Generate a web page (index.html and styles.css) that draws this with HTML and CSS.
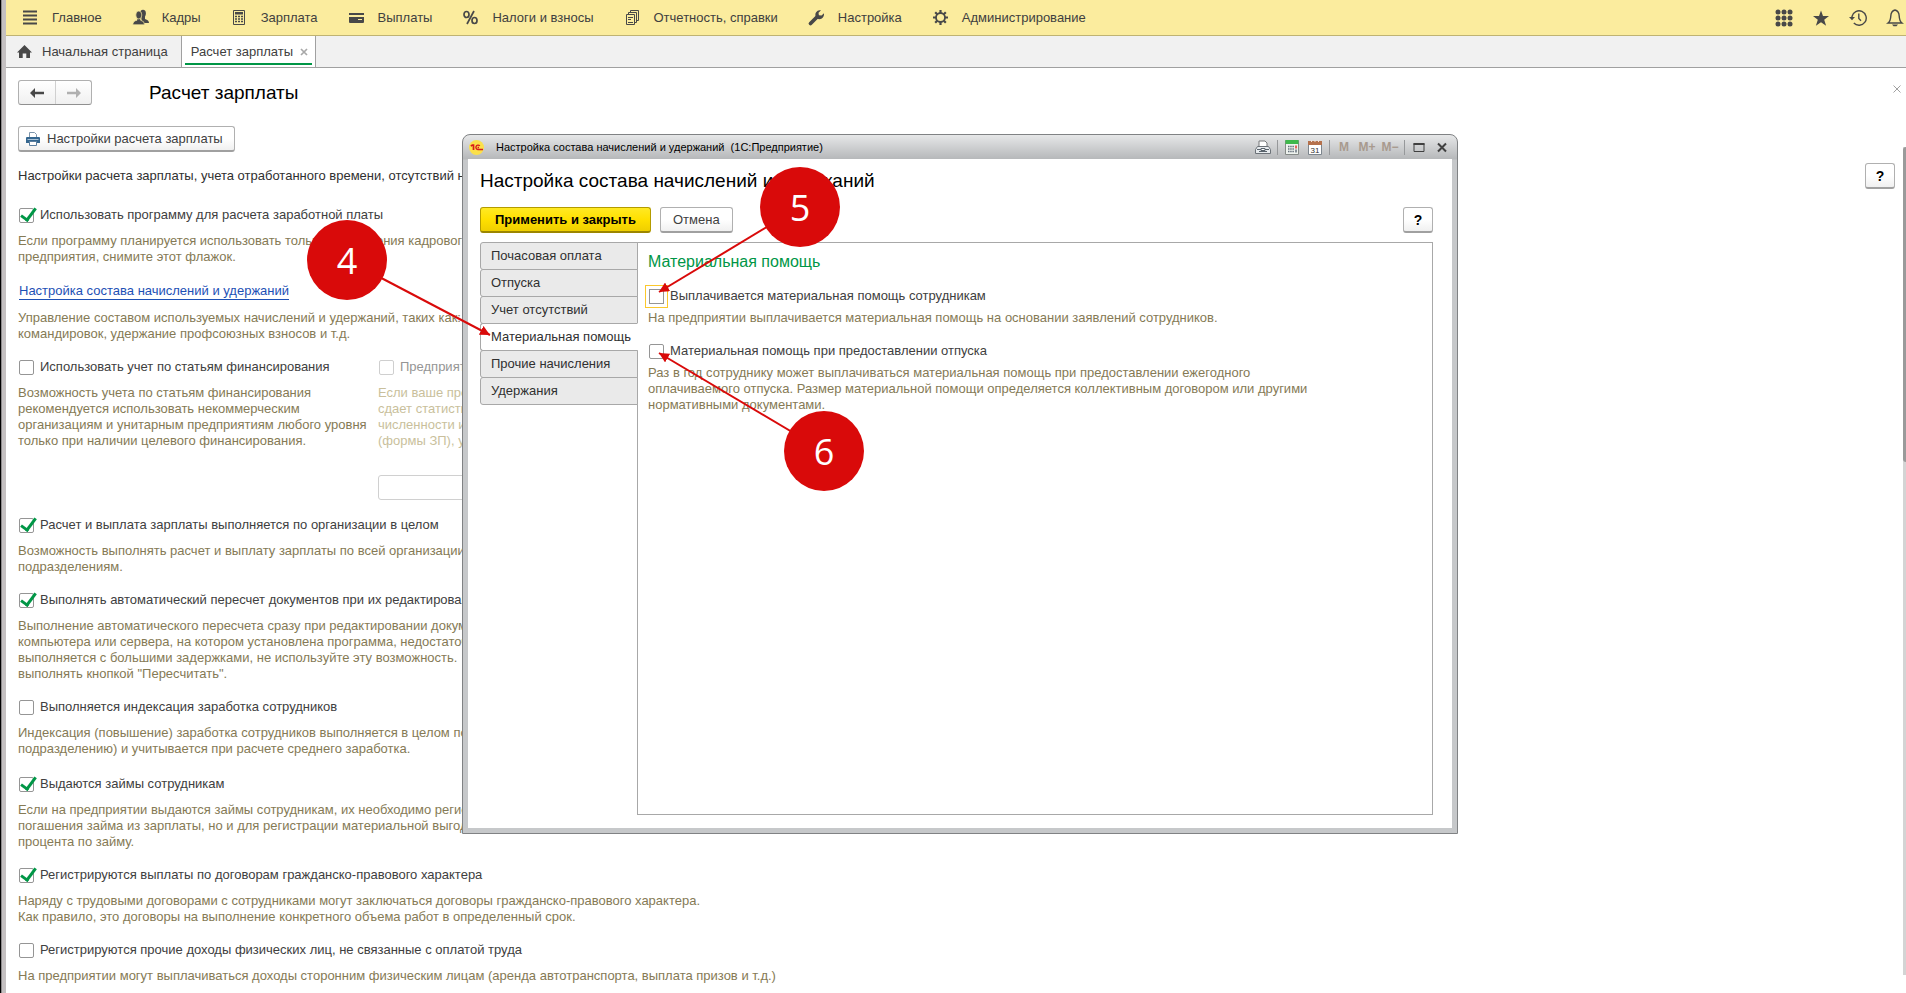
FILE: index.html
```
<!DOCTYPE html>
<html lang="ru">
<head>
<meta charset="utf-8">
<title>Расчет зарплаты</title>
<link rel="stylesheet" href="styles.css">
</head>
<body>
<div class="app">
  <header class="sections">
    <nav class="sections-list">
      <a class="section" href="#"><svg class="icon" viewBox="0 0 15 15"><path d="M0 1.500h14M0 5.500h14M0 9.500h14M0 13.500h14" stroke="#484848" stroke-width="2"/></svg>Главное</a>
      <a class="section" href="#"><svg class="icon" viewBox="0 0 15 15"><g fill="#484848"><ellipse cx="10" cy="3.400" rx="2.900" ry="3.600"/><path d="M8 6h4v3q4 1 4 4H9z"/></g><g fill="#484848" stroke="#fbec9e" stroke-width="0.700"><path d="M4 8h3.600v2.200q4 .8 4 4.600H-.2q0-3.800 4.200-4.600z"/><ellipse cx="5.800" cy="5" rx="3" ry="4"/></g></svg>Кадры</a>
      <a class="section" href="#"><svg class="icon" viewBox="0 0 15 15"><path d="M1.500.5h11v14h-11z" fill="none" stroke="#484848"/><path d="M3 2h8v2.500H3z" fill="#484848"/><path d="M3 6.500h8.500M3 9h8.500M3 11.500h8.500" stroke="#484848" stroke-width="1.700" stroke-dasharray="2 1"/></svg>Зарплата</a>
      <a class="section" href="#"><svg class="icon" viewBox="0 0 15 15"><path d="M0 3h15v2H0zM0 7h15v5q0 1-1 1H1q-1 0-1-1z" fill="#484848"/><path d="M9 9.500h4" stroke="#fbec9e"/></svg>Выплаты</a>
      <a class="section" href="#"><svg class="icon" viewBox="0 0 15 15" fill="none" stroke="#484848" stroke-width="1.700"><ellipse cx="3.500" cy="4.500" rx="2.500" ry="3"/><ellipse cx="11.500" cy="10.500" rx="2.500" ry="3"/><path d="M11 1 4 14"/></svg>Налоги и взносы</a>
      <a class="section" href="#"><svg class="icon" viewBox="0 0 15 15" fill="none" stroke="#484848"><path d="M1.500 4.500h8v10h-8zM3.500 4V2.500h8v10H10M5.500 2V.5h8v10H12"/><path d="M3 7.500h5M3 9.500h3M3 12.500h5"/></svg>Отчетность, справки</a>
      <a class="section" href="#"><svg class="icon" viewBox="0 0 15 15"><path d="M1.500 13.500 8 7" stroke="#484848" stroke-width="3.800" stroke-linecap="round"/><path d="M6.300 5.200Q6.300 1 10.500.2L12 .3 9.500 2.800l.4 2.500 2.600.3L15 3.200q.3 3.600-2.200 5.200Q10.500 9.800 8 8.600z" fill="#484848"/></svg>Настройка</a>
      <a class="section" href="#"><svg class="icon" viewBox="0 0 15 15" fill="none" stroke="#484848"><circle cx="7.500" cy="7.500" r="4.500" stroke-width="1.800"/><path d="M7.500 0v3M7.500 12v3M0 7.500h3M12 7.500h3M2.200 2.200l2 2M10.800 10.800l2 2M12.800 2.200l-2 2M4.200 10.800l-2 2" stroke-width="2.200"/></svg>Администрирование</a>
    </nav>
    <div class="tools">
      <button class="tool" aria-label="Все функции"><svg viewBox="0 0 18 18" fill="#484848"><circle cx="3" cy="3" r="2.500"/><circle cx="9" cy="3" r="2.500"/><circle cx="15" cy="3" r="2.500"/><circle cx="3" cy="9" r="2.500"/><circle cx="9" cy="9" r="2.500"/><circle cx="15" cy="9" r="2.500"/><circle cx="3" cy="15" r="2.500"/><circle cx="9" cy="15" r="2.500"/><circle cx="15" cy="15" r="2.500"/></svg></button>
      <button class="tool" aria-label="Избранное"><svg viewBox="0 0 18 18" fill="#484848"><path d="m9 1.500 2 5.600h6l-4.800 3.600 1.900 6L9 13.200l-5.100 3.500 1.900-6L1 7.100h6z"/></svg></button>
      <button class="tool" aria-label="История"><svg viewBox="0 0 18 18" fill="none" stroke="#484848" stroke-width="1.400"><path d="M3 10V7.500A7.200 7.200 0 1 1 4.800 14"/><path d="M0 8h6l-3 3.200z" fill="#484848" stroke="none"/><path d="M9.800 4.500v5l2.200 2.200"/></svg></button>
      <button class="tool" aria-label="Уведомления"><svg viewBox="0 0 18 18" fill="none" stroke="#484848" stroke-width="1.400"><path d="M9 1Q5 2 4.800 7T2 14h14q-2.600-2-2.800-7T9 1z"/><path d="M6 15.500h6l-1.500 1.800h-3z" fill="#484848" stroke="none"/></svg></button>
    </div>
  </header>

  <nav class="tabs">
    <a class="tab tab-home" href="#"><svg class="icon" viewBox="0 0 15 15" fill="#484848"><path d="M7.500 1 15 8.500h-2V14H9.300V9.500H5.700V14H2V8.500H0z"/></svg>Начальная страница</a>
    <a class="tab tab-active" href="#"><span>Расчет зарплаты</span><svg class="tab-close" viewBox="0 0 8 8"><path d="m1 1 6 6M7 1 1 7" stroke="#a8a8a8" stroke-width="1.700"/></svg></a>
  </nav>

  <main class="page">
    <div class="page-head">
      <div class="history">
        <button class="history-btn" aria-label="Назад"><svg viewBox="0 0 14 10"><path d="M0 5 5 0v3.700h9v2.600H5V10z" fill="#484848"/></svg></button>
        <button class="history-btn" aria-label="Вперед"><svg viewBox="0 0 14 10"><path d="M14 5 9 0v3.700H0v2.600h9V10z" fill="#b0b0b0"/></svg></button>
      </div>
      <h1 class="title">Расчет зарплаты</h1>
      <button class="page-close" aria-label="Закрыть"><svg viewBox="0 0 8 8"><path d="m.5.5 7 7M7.500.5l-7 7" stroke="#a0a0a0"/></svg></button>
    </div>
    <div class="commands">
      <button class="btn btn-print"><svg class="print-icon" viewBox="0 0 14 14"><path d="M3.500 5V.5h5l2 2V5" fill="#fff" stroke="#7d95ab"/><path d="M1 5h12q1 0 1 1v5H0V6q0-1 1-1z" fill="#34668f"/><path d="M1.500 7.500h11" stroke="#a9c2d6"/><path d="M3.500 9.500h7v4h-7z" fill="#fff" stroke="#5b7f9f"/></svg>Настройки расчета зарплаты</button>
    </div>
    <div class="intro"><p>Настройки расчета зарплаты, учета отработанного времени, отсутствий на</p><button class="btn btn-help">?</button></div>

    <section class="setting">
      <label class="check"><input type="checkbox" checked>Использовать программу для расчета заработной платы</label>
      <p class="hint">Если программу планируется использовать только для ведения кадрового<br>предприятия, снимите этот флажок.</p>
    </section>
    <section class="setting setting-link">
      <a class="link" href="#">Настройка состава начислений и удержаний</a>
      <p class="hint">Управление составом используемых начислений и удержаний, таких как:<br>командировок, удержание профсоюзных взносов и т.д.</p>
    </section>
    <div class="columns">
      <section class="setting">
        <label class="check"><input type="checkbox">Использовать учет по статьям финансирования</label>
        <p class="hint">Возможность учета по статьям финансирования<br>рекомендуется использовать некоммерческим<br>организациям и унитарным предприятиям любого уровня<br>только при наличии целевого финансирования.</p>
      </section>
      <section class="setting setting-off">
        <label class="check"><input type="checkbox" disabled>Предприятие</label>
        <p class="hint">Если ваше пред<br>сдает статистику<br>численности и<br>(формы ЗП), у</p>
        <input class="field" type="text" aria-label="Предприятие" disabled>
      </section>
    </div>
    <section class="setting">
      <label class="check"><input type="checkbox" checked>Расчет и выплата зарплаты выполняется по организации в целом</label>
      <p class="hint">Возможность выполнять расчет и выплату зарплаты по всей организации<br>подразделениям.</p>
    </section>
    <section class="setting">
      <label class="check"><input type="checkbox" checked>Выполнять автоматический пересчет документов при их редактировании</label>
      <p class="hint">Выполнение автоматического пересчета сразу при редактировании документа<br>компьютера или сервера, на котором установлена программа, недостаточно<br>выполняется с большими задержками, не используйте эту возможность.<br>выполнять кнопкой "Пересчитать".</p>
    </section>
    <section class="setting">
      <label class="check"><input type="checkbox">Выполняется индексация заработка сотрудников</label>
      <p class="hint">Индексация (повышение) заработка сотрудников выполняется в целом по<br>подразделению) и учитывается при расчете среднего заработка.</p>
    </section>
    <section class="setting setting-loans">
      <label class="check"><input type="checkbox" checked>Выдаются займы сотрудникам</label>
      <p class="hint">Если на предприятии выдаются займы сотрудникам, их необходимо регистрировать<br>погашения займа из зарплаты, но и для регистрации материальной выгоды<br>процента по займу.</p>
    </section>
    <section class="setting">
      <label class="check"><input type="checkbox" checked>Регистрируются выплаты по договорам гражданско-правового характера</label>
      <p class="hint">Наряду с трудовыми договорами с сотрудниками могут заключаться договоры гражданско-правового характера.<br>Как правило, это договоры на выполнение конкретного объема работ в определенный срок.</p>
    </section>
    <section class="setting">
      <label class="check"><input type="checkbox">Регистрируются прочие доходы физических лиц, не связанные с оплатой труда</label>
      <p class="hint">На предприятии могут выплачиваться доходы сторонним физическим лицам (аренда автотранспорта, выплата призов и т.д.)</p>
    </section>
  </main>
  <div class="scroll"><div class="scroll-thumb"></div></div>

  <div class="dialog" role="dialog" aria-labelledby="dialog-title">
    <div class="dialog-bar">
      <svg class="logo" viewBox="0 0 15 15"><circle cx="7.500" cy="7.500" r="7.500" fill="#fbe04a"/><path d="m1.800 6 1.700-1h1v5" fill="none" stroke="#d81b1b" stroke-width="1.700"/><path d="M10.800 5.900a2.200 2.200 0 1 0-1.500 3.600H14M10 7.500H8.600" fill="none" stroke="#d81b1b" stroke-width="1.400"/></svg>
      <span class="dialog-caption">Настройка состава начислений и удержаний&nbsp; (1С:Предприятие)</span>
      <div class="dialog-tools">
        <button class="bar-btn" aria-label="Печать"><svg viewBox="0 0 16 15"><path d="M4 7V1h6l2 2v4" fill="#fff" stroke="#77797b"/><path d="M2.500 6.500h11l2 3v4H.5v-4z" fill="#e7ebee" stroke="#6c7278"/><path d="M2 9.500h12M4 11.500h8" stroke="#59636c"/><path d="M6 8.500h4v2H6z" fill="#fff" stroke="#59636c"/></svg></button>
        <i class="sep"></i>
        <button class="bar-btn" aria-label="Калькулятор"><svg viewBox="0 0 16 15"><path d="M1.500.5h13v14h-13z" fill="#eef2ee" stroke="#858a87"/><path d="M1.500 0h13v4h-13z" fill="#3fb84c"/><path d="M4 6.500h6M4 9h6M4 11.500h6" stroke="#66717c" stroke-dasharray="1.500 .7" stroke-width="1.600"/><path d="M12 5.500v3" stroke="#e0342b" stroke-width="1.500"/><path d="M12 9.500v3" stroke="#66717c" stroke-width="1.500"/></svg></button>
        <button class="bar-btn" aria-label="Календарь"><svg viewBox="0 0 16 15"><path d="M1.500 1.500h13v13h-13z" fill="#fff" stroke="#7c858d"/><path d="M1 1h14v4H1z" fill="#b5714c"/><path d="M4.500 0v2M8 0v2M11.500 0v2" stroke="#f3e2d8"/><text x="8" y="13" text-anchor="middle" class="cal-day">31</text></svg></button>
        <i class="sep"></i>
        <button class="bar-btn memory">M</button>
        <button class="bar-btn memory">M+</button>
        <button class="bar-btn memory">M−</button>
        <i class="sep"></i>
        <button class="bar-btn" aria-label="Развернуть"><svg viewBox="0 0 16 15"><path d="M3 3.500h10v8H3z" fill="none" stroke="#404040"/><path d="M2.500 3h11v2h-11z" fill="#404040"/></svg></button>
        <button class="bar-btn" aria-label="Закрыть"><svg viewBox="0 0 16 15"><path d="m4 3.500 8 8M12 3.500l-8 8" stroke="#404040" stroke-width="2"/></svg></button>
      </div>
    </div>
    <div class="dialog-body">
      <h2 class="title" id="dialog-title">Настройка состава начислений и удержаний</h2>
      <div class="dialog-commands">
        <button class="btn btn-main">Применить и закрыть</button>
        <button class="btn btn-cancel">Отмена</button>
        <button class="btn btn-help">?</button>
      </div>
      <div class="dialog-content">
        <div class="side" role="tablist">
          <button class="side-tab" role="tab">Почасовая оплата</button>
          <button class="side-tab" role="tab">Отпуска</button>
          <button class="side-tab" role="tab">Учет отсутствий</button>
          <button class="side-tab side-active" role="tab" aria-selected="true">Материальная помощь</button>
          <button class="side-tab" role="tab">Прочие начисления</button>
          <button class="side-tab" role="tab">Удержания</button>
        </div>
        <div class="panel" role="tabpanel">
          <h3 class="panel-title">Материальная помощь</h3>
          <section class="option">
            <label class="check"><input class="focused" type="checkbox">Выплачивается материальная помощь сотрудникам</label>
            <p class="hint">На предприятии выплачивается материальная помощь на основании заявлений сотрудников.</p>
          </section>
          <section class="option">
            <label class="check"><input type="checkbox">Материальная помощь при предоставлении отпуска</label>
            <p class="hint">Раз в год сотруднику может выплачиваться материальная помощь при предоставлении ежегодного<br>оплачиваемого отпуска. Размер материальной помощи определяется коллективным договором или другими<br>нормативными документами.</p>
          </section>
        </div>
      </div>
    </div>
  </div>

  <svg class="callouts" width="1000" height="600" viewBox="0 0 1000 600">
    <defs><marker id="tip" markerUnits="userSpaceOnUse" markerWidth="12" markerHeight="10" refX="10" refY="5" orient="auto"><path d="M0 0 10 5 0 10z" fill="#d90a0a"/></marker></defs>
    <g stroke="#d90a0a" stroke-width="2" marker-end="url(#tip)">
      <path d="M347 260 490 335"/><path d="M800 207 659 292"/><path d="M824 451 659 353"/>
    </g>
    <g fill="#d90a0a"><circle cx="347" cy="260" r="40"/><circle cx="800" cy="207" r="40"/><circle cx="824" cy="451" r="40"/></g>
    <g class="callout-text"><text x="347" y="274">4</text><text x="800" y="221">5</text><text x="824" y="465">6</text></g>
  </svg>
</div>
</body>
</html>
```
FILE: styles.css
```
* { box-sizing: border-box; }
body {
  margin: 0;
  background: #fff;
  font-family: "Liberation Sans", Arial, sans-serif;
  font-size: 13px;
  line-height: 16px;
  color: #404040;
}
h1, h2, h3, p { margin: 0; font-weight: normal; }
button, input { font: inherit; color: inherit; margin: 0; }
button { padding: 0; border: 0; background: none; }
svg { display: block; flex: none; }
a { color: inherit; text-decoration: none; }

.app {
  position: relative;
  min-height: 100vh;
  overflow: hidden;
  border-left: 1px solid #000;
  box-shadow: inset 1px 0 #8c8a8b, inset 5px 0 #c4c0c1;
  padding-left: 5px;
}

.sections {
  display: flex;
  justify-content: space-between;
  height: 36px;
  padding-left: 17px;
  background: #fbec9e;
  border-bottom: 1px solid #bfb373;
}
.sections-list { display: flex; align-items: center; gap: 31px; }
.section { display: flex; align-items: center; gap: 14px; white-space: nowrap; }
.icon { width: 15px; height: 15px; overflow: visible; }
.tools { display: flex; align-items: center; gap: 19px; padding-right: 2px; }
.tool svg { width: 18px; height: 18px; }

.tabs {
  display: flex;
  height: 32px;
  background: #f1f1f1;
  border-bottom: 1px solid #a0a0a0;
}
.tab { display: flex; align-items: center; border-right: 1px solid #a0a0a0; }
.tab-home { gap: 10px; padding: 0 13px 0 11px; }
.tab-active {
  gap: 7px;
  padding: 0 7px 0 9px;
  background: linear-gradient(#009646, #009646) center 27px / calc(100% - 6px) 2px no-repeat #fff;
}
.tab-close { width: 8px; height: 8px; }

.page { padding: 12px 11px 8px 12px; }
.page-head { display: flex; align-items: center; height: 25px; }
.history {
  display: flex;
  border: 1px solid #b0b0b0;
  border-bottom-color: #909090;
  border-radius: 3px;
  background: linear-gradient(#fff, #f0f0f0);
}
.history-btn { display: flex; align-items: center; justify-content: center; width: 36px; height: 23px; }
.history-btn + .history-btn { border-left: 1px solid #d0d0d0; }
.history svg { width: 14px; height: 10px; }
.title { font-size: 19px; line-height: 24px; color: #000; }
.page-head .title { margin-left: 57px; }
.page-close { margin: 0 -6px 8px auto; }
.page-close svg { width: 8px; height: 8px; }

.btn {
  height: 26px;
  border: 1px solid #b0b0b0;
  border-bottom: 2px solid #a0a0a0;
  border-radius: 3px;
  background: linear-gradient(#fff 50%, #f0f0f0);
  white-space: nowrap;
}
.commands { display: flex; margin-top: 21px; }
.btn-print { display: flex; align-items: center; gap: 7px; padding: 0 11px 0 7px; }
.print-icon { width: 14px; height: 14px; }
.btn-help { width: 30px; color: #000; font-size: 14px; font-weight: bold; }

.intro { display: flex; align-items: center; justify-content: space-between; margin-top: 11px; height: 26px; }
.intro p { color: #303030; }
.intro + .setting { margin-top: 18px; }

.setting { margin-top: 17px; white-space: nowrap; }
.setting-link { margin-top: 18px; }
.setting-loans { margin-top: 19px; }
.check { display: flex; align-items: center; gap: 6px; height: 16px; padding-left: 1px; }
.check input {
  appearance: none;
  position: relative;
  flex: none;
  width: 15px;
  height: 15px;
  border: 1px solid #959595;
  border-radius: 2px;
  background: #fff;
}
.check input:checked::after {
  content: "";
  position: absolute;
  left: 4px;
  top: -4px;
  width: 6px;
  height: 13px;
  border: solid #009646;
  border-width: 0 3px 3px 0;
  transform: rotate(36deg);
}
.hint { margin-top: 10px; color: #857a55; }
.link { display: block; width: max-content; margin-left: 1px; color: #1d50b5; border-bottom: 1px solid #1d50b5; }

.columns { display: grid; grid-template-columns: 360px 1fr; margin-top: 17px; }
.columns .setting { margin-top: 0; }
.setting-off .check { color: #959595; }
.setting-off .check input { border-color: #cfcfcf; }
.setting-off .hint { color: #c9bf9c; }
.field { display: block; width: 200px; height: 25px; margin-top: 26px; border: 1px solid #d0d0d0; border-radius: 3px; background: #fff; }

.scroll { position: absolute; right: 0; top: 147px; bottom: 18px; width: 3px; background: #d4d4d4; }
.scroll-thumb { height: 38%; background: #9a9a9a; border-radius: 3px 0 0 3px; }

.dialog {
  position: absolute;
  left: 461px;
  top: 134px;
  width: 996px;
  height: 700px;
  display: flex;
  flex-direction: column;
  padding: 0 5px 5px;
  border: 1px solid #808284;
  border-radius: 8px 8px 0 0;
  background: linear-gradient(#e6e7e8, #b6b8ba 24px, #c6c8ca 25px);
}
.dialog-bar { display: flex; align-items: center; height: 24px; padding: 0 1px; }
.logo { width: 15px; height: 15px; }
.dialog-caption { margin-left: 12px; font-size: 11px; color: #000; white-space: nowrap; }
.dialog-tools { display: flex; align-items: center; gap: 5px; margin-left: auto; }
.bar-btn { display: flex; justify-content: center; min-width: 18px; }
.bar-btn svg { width: 16px; height: 15px; }
.memory { color: #a89a8e; font-size: 12px; font-weight: bold; }
.sep { width: 1px; height: 15px; background: #96989a; }
.cal-day { font-size: 8px; fill: #303030; }

.dialog-body { flex: 1; display: flex; flex-direction: column; padding: 10px 19px 13px 12px; background: #fff; }
.dialog-commands { display: flex; gap: 9px; margin-top: 14px; }
.btn-main { padding: 0 14px; border-color: #b39b00; border-bottom-color: #9c8600; background: linear-gradient(#ffe924, #ffe000 50%, #efcf00); color: #000; font-weight: bold; }
.btn-cancel { padding: 0 12px; }
.dialog-commands .btn-help { margin-left: auto; }

.dialog-content { flex: 1; display: flex; margin-top: 9px; }
.side { display: flex; flex-direction: column; width: 158px; margin-right: -1px; z-index: 1; }
.side-tab {
  height: 28px;
  margin-bottom: -1px;
  padding-left: 10px;
  border: 1px solid #a8a8a8;
  border-radius: 3px 0 0 3px;
  background: #eaeaea;
  color: #303030;
  text-align: left;
  white-space: nowrap;
}
.side-active { background: #fff; border-right-color: #fff; }
.panel { flex: 1; padding: 7px 10px; border: 1px solid #a8a8a8; }
.panel-title { font-size: 16px; line-height: 24px; color: #009646; }
.option { margin-top: 17px; white-space: nowrap; }
.panel-title + .option { margin-top: 14px; }
.option .hint { margin-top: 6px; }
.check .focused { border-radius: 0; outline: 1px solid #fcc82c; outline-offset: 3px; }

.callouts { position: absolute; z-index: 2; left: -1px; top: 0; pointer-events: none; }
.callout-text { font-family: "Open Sans", sans-serif; font-size: 36px; fill: #fff; text-anchor: middle; }
```
